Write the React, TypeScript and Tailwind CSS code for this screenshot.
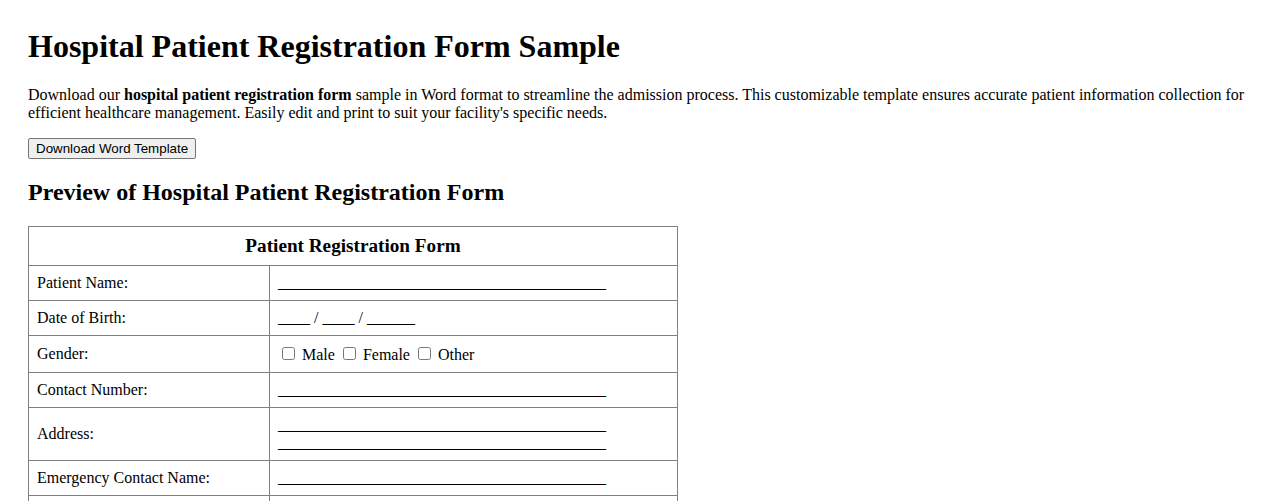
import React from 'react';

const serif = { fontFamily: '"Liberation Serif", "Times New Roman", serif' };

const line = '_'.repeat(41);

type Row = { label: string; value: React.ReactNode };

const rows: Row[] = [
  { label: 'Patient Name:', value: line },
  { label: 'Date of Birth:', value: '____ / ____ / ______' },
  {
    label: 'Gender:',
    value: (
      <>
        <input type="checkbox" className="mt-[3px] mr-[3px] mb-[3px] ml-[4px]" /> Male{' '}
        <input type="checkbox" className="mt-[3px] mr-[3px] mb-[3px] ml-[4px]" /> Female{' '}
        <input type="checkbox" className="mt-[3px] mr-[3px] mb-[3px] ml-[4px]" /> Other
      </>
    ),
  },
  { label: 'Contact Number:', value: line },
  {
    label: 'Address:',
    value: (
      <>
        {line}
        <br />
        {line}
      </>
    ),
  },
  { label: 'Emergency Contact Name:', value: line },
  { label: 'Emergency Contact Number:', value: line },
  { label: 'Insurance Provider:', value: line },
  { label: 'Policy Number:', value: line },
];

const App = () => {
  return (
    <div className="min-h-screen bg-white text-black p-[28px] text-[16px] leading-[normal]" style={serif}>
      <h1 className="m-0 mb-[21.44px] text-[32px] font-bold leading-[normal]">
        Hospital Patient Registration Form Sample
      </h1>
      <p className="m-0 mb-[16px] leading-[normal]">
        Download our <strong className="font-bold">hospital patient registration form</strong> sample in Word
        format to streamline the admission process. This customizable template ensures accurate patient
        information collection for efficient healthcare management. Easily edit and print to suit your
        facility's specific needs.
      </p>
      <button
        className="bg-[#efefef] border border-[#767676] rounded-[2px] px-[7px] py-[2px] text-[13.333px] leading-[normal] text-black"
        style={{ fontFamily: '"Liberation Sans", Arial, sans-serif' }}
      >
        Download Word Template
      </button>
      <h2 className="mt-[19.92px] mb-[19.92px] text-[24px] font-bold leading-[normal]">
        Preview of Hospital Patient Registration Form
      </h2>

      {/* Form preview */}
      <table className="w-[650px] border-collapse">
        <thead>
          <tr>
            <th colSpan={2} className="border border-[#808080] p-[8px] text-center text-[19.2px] font-bold leading-[normal]">
              Patient Registration Form
            </th>
          </tr>
        </thead>
        <tbody>
          {rows.map((row) => (
            <tr key={row.label}>
              <td className="w-[241px] border border-[#808080] p-[8px] align-middle leading-[normal]">{row.label}</td>
              <td className="border border-[#808080] p-[8px] align-middle leading-[normal]">{row.value}</td>
            </tr>
          ))}
        </tbody>
      </table>
    </div>
  );
};

export default App;
